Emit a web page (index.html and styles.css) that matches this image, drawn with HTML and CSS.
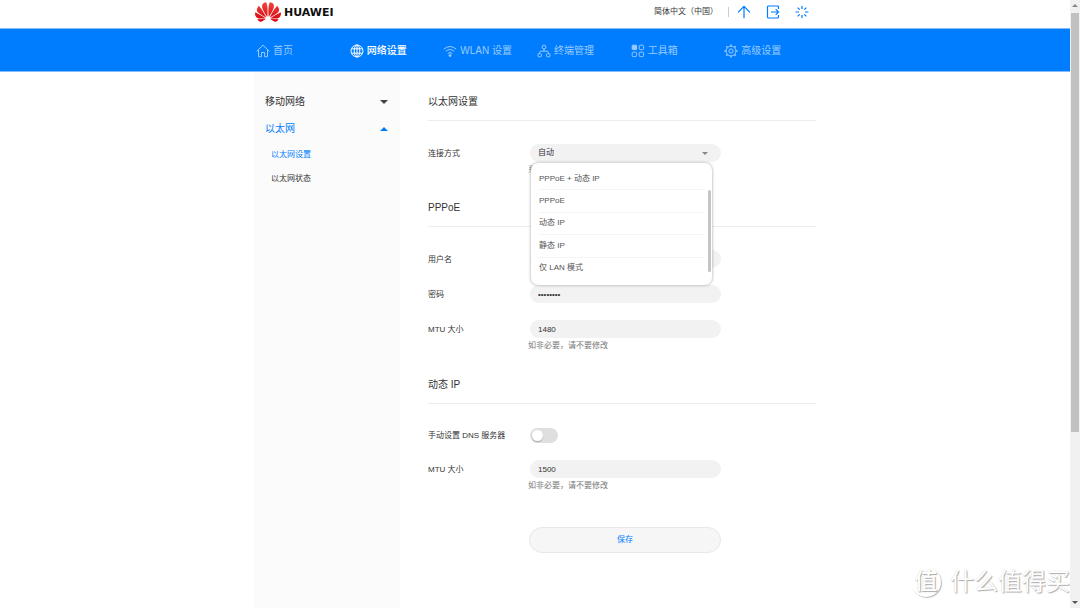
FILE: index.html
```html
<!DOCTYPE html>
<html lang="zh-CN">
<head>
<meta charset="utf-8">
<meta name="viewport" content="width=device-width, initial-scale=1">
<title>以太网设置</title>
<link rel="stylesheet" href="styles.css">
</head>
<body>
<div class="page">
  <header class="container topbar">
    <a class="brand" href="#">
      <svg class="brand-mark" viewBox="0 2.9 24 18.2" aria-hidden="true">
        <defs><linearGradient id="petal" x1="0" y1="0" x2="0" y2="1"><stop offset="0" stop-color="#f0463c"/><stop offset="1" stop-color="#d8000f"/></linearGradient></defs>
        <path fill="url(#petal)" d="M3.67 6.14S1.82 7.91 1.72 9.78v.35c.08 1.51 1.22 2.4 1.22 2.4 1.83 1.79 6.26 4.04 7.3 4.55 0 0 .06.03.1-.01l.02-.04v-.04C7.52 10.8 3.67 6.14 3.67 6.14zM9.65 18.6c-.02-.08-.1-.08-.1-.08l-7.38.26c.8 1.43 2.15 2.53 3.56 2.2.96-.25 3.16-1.78 3.88-2.3.06-.05.04-.09.04-.09zm.08-.78C6.49 15.63.21 12.28.21 12.28c-.15.46-.2.9-.21 1.3v.07c0 1.07.4 1.82.4 1.82.8 1.69 2.34 2.2 2.34 2.2.7.3 1.4.31 1.4.31.12.02 4.4 0 5.54 0 .05 0 .08-.05.08-.05v-.06c0-.03-.03-.05-.03-.05zM9.06 3.19a3.42 3.42 0 00-2.57 3.15v.41c.03.6.16 1.05.16 1.05.66 2.9 3.86 7.65 4.55 8.65.05.05.1.03.1.03a.1.1 0 00.06-.1c1.06-10.6-1.11-13.42-1.11-13.42-.32.02-1.19.23-1.19.23zm8.299 2.27s-.49-1.8-2.44-2.28c0 0-.57-.14-1.17-.22 0 0-2.18 2.81-1.12 13.43.01.07.06.08.06.08.07.03.1-.03.1-.03.72-1.03 3.9-5.76 4.55-8.64 0 0 .36-1.4.02-2.34zm-2.92 13.07s-.07 0-.09.05c0 0-.01.07.03.1.7.51 2.85 2 3.88 2.3 0 0 .16.05.43.06h.14c.69-.02 1.9-.37 3-2.26l-7.4-.25zm7.83-8.41c.14-2.06-1.94-3.97-1.94-3.98 0 0-3.85 4.66-6.67 10.8 0 0-.03.08.02.13l.04.01h.06c1.06-.53 5.46-2.77 7.28-4.54 0 0 1.15-.93 1.21-2.42zm1.52 2.14s-6.28 3.37-9.52 5.55c0 0-.05.04-.03.11 0 0 .03.06.07.06 1.16 0 5.56 0 5.67-.02 0 0 .57-.02 1.27-.29 0 0 1.56-.5 2.37-2.27 0 0 .73-1.45.17-3.14z"/>
      </svg>
      <span class="brand-name">HUAWEI</span>
    </a>
    <div class="tools">
      <button class="language" type="button">简体中文（中国）</button>
      <button class="tool" type="button" aria-label="更新"><svg viewBox="0 0 14 14"><path d="M7 13.200V1.500M1 7.300L7 1.300L13 7.300"/></svg></button>
      <button class="tool" type="button" aria-label="退出"><svg viewBox="0 0 14 14"><path d="M12.500 4V2Q12.500 1 11.500 1H2.500Q1.500 1 1.500 2V12Q1.500 13 2.500 13H11.500Q12.500 13 12.500 12V10M5 7H12.500M9.700 4.200L12.500 7L9.700 9.800"/></svg></button>
      <button class="tool" type="button" aria-label="重启"><svg viewBox="0 0 14 14"><path d="M7 1V4M7 10V13M.6 7H4M10 7H13.400M2.600 2.600L4.700 4.700M9.300 9.300L11.400 11.400M2.600 11.400L4.700 9.300M9.300 4.700L11.400 2.600"/></svg></button>
    </div>
  </header>

  <nav class="mainnav">
    <div class="container mainnav-list">
      <a href="#"><svg viewBox="0 0 14 14"><path d="M.6 7.400L7 1.200L13.400 7.400M2.500 6V12.700H5.400V8.500H8.600V12.700H11.500V6"/></svg>首页</a>
      <a href="#" class="active" aria-current="page"><svg viewBox="0 0 14 14"><circle cx="7" cy="7" r="6"/><ellipse cx="7" cy="7" rx="2.800" ry="6"/><path d="M7 1V13M1.700 4.800H12.300M1.700 9.200H12.300"/></svg>网络设置</a>
      <a href="#"><svg viewBox="0 0 14 14"><path d="M.8 5.200Q7-.2 13.200 5.200M2.800 7.400Q7 3.700 11.200 7.400M4.700 9.500Q7 7.500 9.300 9.500"/><circle class="solid" cx="7" cy="11.500" r="1"/></svg>WLAN 设置</a>
      <a href="#"><svg viewBox="0 0 14 14"><circle cx="7" cy="3" r="1.900"/><path d="M7 5V7.200M2.700 9.500V8.200Q2.700 7.200 3.700 7.200H10.300Q11.300 7.200 11.300 8.200V9.500"/><rect x="1" y="9.600" width="3.400" height="3.200" rx="1"/><rect x="9.600" y="9.600" width="3.400" height="3.200" rx="1"/></svg>终端管理</a>
      <a href="#"><svg viewBox="0 0 14 14"><rect class="solid" x="1.200" y="1.200" width="4.400" height="4.400" rx=".5"/><rect x="8.200" y="1.200" width="4.400" height="4.400" rx="1"/><rect x="1.200" y="8.200" width="4.400" height="4.400" rx="1"/><rect x="8.200" y="8.200" width="4.400" height="4.400" rx="1"/></svg>工具箱</a>
      <a href="#"><svg viewBox="0 0 14 14"><circle cx="7" cy="7" r="4.900"/><circle cx="7" cy="7" r="2.100"/><path stroke-width="1.600" d="M7 .4V2M7 12V13.600M.4 7H2M12 7H13.600M2.300 2.300L3.400 3.400M10.600 10.600L11.700 11.700M2.300 11.700L3.400 10.600M10.600 3.400L11.700 2.300"/></svg>高级设置</a>
    </div>
  </nav>

  <div class="container body">
    <aside class="sidebar">
      <button class="group" type="button" aria-expanded="false">移动网络<span class="caret"></span></button>
      <button class="group open" type="button" aria-expanded="true">以太网<span class="caret up"></span></button>
      <a class="sub active" href="#">以太网设置</a>
      <a class="sub" href="#">以太网状态</a>
    </aside>

    <main class="content">
      <form>
        <section class="section">
          <h2>以太网设置</h2>
          <div class="row">
            <label for="mode">连接方式</label>
            <div class="field">
              <div class="select-box">
                <select id="mode" class="control"><option>自动</option></select>
                <span class="caret muted"></span>
              </div>
              <ul class="menu" role="listbox" aria-label="连接方式">
                <li role="option">PPPoE + 动态 IP</li>
                <li role="option">PPPoE</li>
                <li role="option">动态 IP</li>
                <li role="option">静态 IP</li>
                <li role="option">仅 LAN 模式</li>
              </ul>
            </div>
          </div>
          <p class="hint">系统自动选择方式</p>
        </section>

        <section class="section">
          <h2>PPPoE</h2>
          <div class="row"><label for="user">用户名</label><input id="user" class="control" type="text"></div>
          <div class="row"><label for="pass">密码</label><input id="pass" class="control" type="password" value="password"></div>
          <div class="row"><label for="mtu1">MTU 大小</label><input id="mtu1" class="control" type="text" value="1480"></div>
          <p class="hint">如非必要，请不要修改</p>
        </section>

        <section class="section">
          <h2>动态 IP</h2>
          <div class="row compact"><label for="dns">手动设置 DNS 服务器</label><input id="dns" class="switch" type="checkbox" role="switch"></div>
          <div class="row"><label for="mtu2">MTU 大小</label><input id="mtu2" class="control" type="text" value="1500"></div>
          <p class="hint">如非必要，请不要修改</p>
        </section>

        <button class="save" type="submit">保存</button>
      </form>
    </main>
  </div>
</div>

<div class="scrollbar" aria-hidden="true"><span class="step up"></span><span class="track"><span class="thumb"></span></span><span class="step"></span></div>
<div class="watermark"><span class="badge">值</span><span>什么值得买</span></div>
</body>
</html>
```

FILE: styles.css
```css
* { box-sizing: border-box; }

body {
  margin: 0;
  height: 100vh;
  display: flex;
  overflow: hidden;
  background: #fff;
  color: #333;
  font: 8px/10px "Liberation Sans", "Noto Sans CJK SC", sans-serif;
}

button, input, select { font: inherit; color: inherit; border: 0; background: none; padding: 0; margin: 0; }
a { color: inherit; text-decoration: none; }
h2, p, ul { margin: 0; padding: 0; }
svg { display: block; fill: none; stroke: currentColor; }
.solid { fill: currentColor; }

.page { flex: 1; min-width: 0; display: flex; flex-direction: column; }
.container { width: 100%; max-width: 562px; margin: 0 auto; }

/* Top bar */
.topbar { display: flex; justify-content: space-between; height: 28px; padding: 0 7px 4px 1px; }
.brand { display: flex; align-items: center; gap: 3px; color: #111; }
.brand-mark { width: 26px; height: 20px; stroke: none; }
.brand-name { padding-top: 2px; font: bold 11px/16px "DejaVu Sans", sans-serif; }
.tools { display: flex; align-items: center; gap: 15px; color: #007dff; }
.language { color: #333; padding-right: 10px; border-right: 1px solid #ccc; margin-right: -7px; }
.tool svg { width: 14px; height: 14px; stroke-width: 1.2; }

/* Main navigation */
.mainnav { background: #007dff; border: solid #7fbdff; border-width: 1px 0; color: #99cbff; }
.mainnav-list { display: grid; grid-template-columns: repeat(6, 1fr); height: 42px; padding-top: 1px; }
.mainnav a { display: flex; align-items: center; gap: 3px; padding-left: 2px; font-size: 10px; line-height: 16px; white-space: nowrap; }
.mainnav .active { color: #fff; font-weight: 500; }
.mainnav svg { width: 14px; height: 14px; stroke-width: 1; }

.body { flex: 1; display: flex; min-height: 0; }

/* Side menu */
.sidebar { width: 146px; flex: none; display: flex; flex-direction: column; padding: 20px 12px 0 11px; background: #fbfbfb; }
.group { display: flex; align-items: center; justify-content: space-between; height: 20px; margin-bottom: 7px; font-size: 10px; line-height: 16px; }
.group.open { margin-bottom: 4px; }
.sub { padding: 7px 0 7px 6px; }
.group.open, .sub.active { color: #007dff; }
.caret { border: solid transparent; border-width: 4px 4px 0; border-top-color: #444; }
.caret.up { border-width: 0 4px 4px; border-bottom-color: #007dff; }
.caret.muted { border-width: 3px 3px 0; border-top-color: #888; }

/* Settings form */
.content { flex: 1; padding: 22px 0 0 28px; }
.section + .section { margin-top: 25px; }
.section:last-of-type { margin-top: 26px; }
h2 { padding-bottom: 10px; margin-bottom: 23px; border-bottom: 1px solid #ececec; font-size: 10px; line-height: 16px; font-weight: 400; }
.row { display: grid; grid-template-columns: 102px 191px; align-items: center; height: 18px; }
.row + .row { margin-top: 17px; }
.row.compact { height: 16px; }
.row label { padding-top: 1px; }
.field { position: relative; }
.control { display: block; width: 100%; height: 18px; padding: 0 8px; border-radius: 9px; background: #f2f2f2; appearance: none; outline: 0; }
.select-box { display: grid; align-items: center; }
.select-box > * { grid-area: 1 / 1; }
.select-box .caret { justify-self: end; margin-right: 13px; pointer-events: none; }
.hint { margin: 3px 0 0 100px; color: #777; }

.menu {
  position: absolute;
  z-index: 1;
  top: 19px;
  left: 1px;
  width: 181px;
  height: 122px;
  padding: 5px 7px 5px;
  display: grid;
  grid-auto-rows: 1fr;
  list-style: none;
  background: #fff;
  border-radius: 7px;
  box-shadow: 0 0 3px #999;
  color: #555;
}
.menu::after { content: ""; position: absolute; top: 27px; right: 1px; width: 3px; height: 82px; border-radius: 2px; background: #c4c4c4; }
.menu li { display: flex; align-items: center; padding-left: 1px; border-bottom: 1px solid #f5f5f5; }
.menu li:last-child { border-bottom-color: transparent; }

.switch { appearance: none; display: flex; align-items: center; width: 28px; height: 15px; padding: 0 2px; border-radius: 8px; background: #dfdfdf; }
.switch::before { content: ""; width: 11px; height: 11px; border-radius: 50%; background: #fff; box-shadow: 0 1px 1px #aaa; }

.save { display: block; width: 192px; height: 26px; margin: 36px 0 0 101px; border: 1px solid #e8e8e8; border-radius: 13px; background: #f6f6f6; color: #007dff; }

/* Window scrollbar */
.scrollbar { width: 10px; flex: none; display: flex; flex-direction: column; align-items: center; gap: 6px; padding: 4px 0; background: #f1f1f1; }
.track { flex: 1; width: 8px; }
.thumb { display: block; height: 72%; background: #c1c1c1; }
.step { border: solid transparent; border-width: 3px 3px 0; border-top-color: #555; }
.step.up { border-width: 0 3px 3px; border-bottom-color: #888; }

/* Watermark over the page corner */
.watermark { position: absolute; right: 10px; bottom: 9px; display: flex; align-items: center; gap: 9px; color: #fff; font-size: 24px; line-height: 34px; text-shadow: 1px 1px 1px #aaa, 0 0 1px #ccc; }
.badge { width: 30px; height: 30px; border-radius: 50%; box-shadow: 1px 1px 1px #bbb; font-size: 23px; line-height: 28px; font-weight: 500; text-align: center; }
```
